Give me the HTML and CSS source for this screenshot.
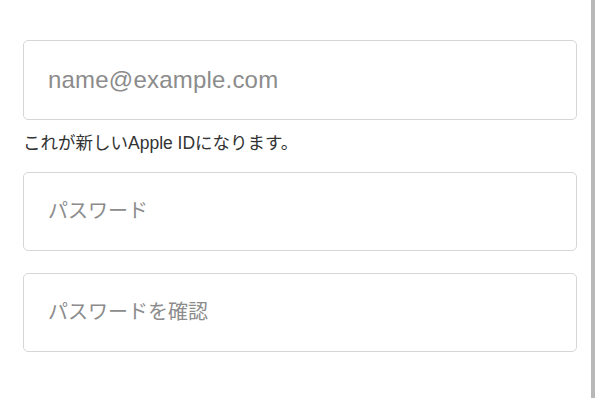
FILE: index.html
```html
<!DOCTYPE html>
<html lang="ja">
<head>
  <meta charset="UTF-8">
  <meta name="viewport" content="width=device-width, initial-scale=1.0">
  <title>Apple ID</title>
  <link rel="stylesheet" href="styles.css">
</head>
<body>
  <div class="page">
    <!-- Sign up form -->
    <form class="form">
      <input class="field field-email" type="email" placeholder="name@example.com">
      <p class="hint">これが新しいApple IDになります。</p>
      <input class="field field-ja" type="password" placeholder="パスワード">
      <input class="field field-ja field-confirm" type="password" placeholder="パスワードを確認">
    </form>

    <!-- Scroll indicator on the right -->
    <div class="scroll-bar"></div>
    <div class="scroll-gutter"></div>
  </div>
</body>
</html>
```

FILE: styles.css
```css
body {
  margin: 0;
  background: #ffffff;
  font-family: "Liberation Sans", "Noto Sans CJK JP", sans-serif;
}

.page {
  display: flex;
  height: 400px;
  overflow: hidden;
}

/* Form Column */
.form {
  flex: 1;
  display: flex;
  flex-direction: column;
  padding: 40px 14px 0 23px;
  margin: 0;
}

.field {
  box-sizing: border-box;
  height: 80px;
  width: 100%;
  margin: 0;
  padding: 0 24px;
  border: 1px solid #d6d6d6;
  border-radius: 5px;
  background: #ffffff;
  font-family: "Liberation Sans", "Noto Sans CJK JP", sans-serif;
  color: #222;
  outline: none;
}

.field::placeholder {
  color: #8c8c8c;
}

.field-email {
  font-size: 24px;
  letter-spacing: 0.2px;
}

.field-ja {
  font-size: 20px;
  height: 79px;
}

.field-confirm {
  margin-top: 22px;
}

.hint {
  margin: 11px 0 17px 0;
  line-height: 24px;
  font-size: 17.5px;
  color: #333333;
}

/* Scroll Indicator */
.scroll-bar {
  width: 4px;
  height: 398px;
  background: #b8b8b8;
}

.scroll-gutter {
  width: 5px;
}
```
